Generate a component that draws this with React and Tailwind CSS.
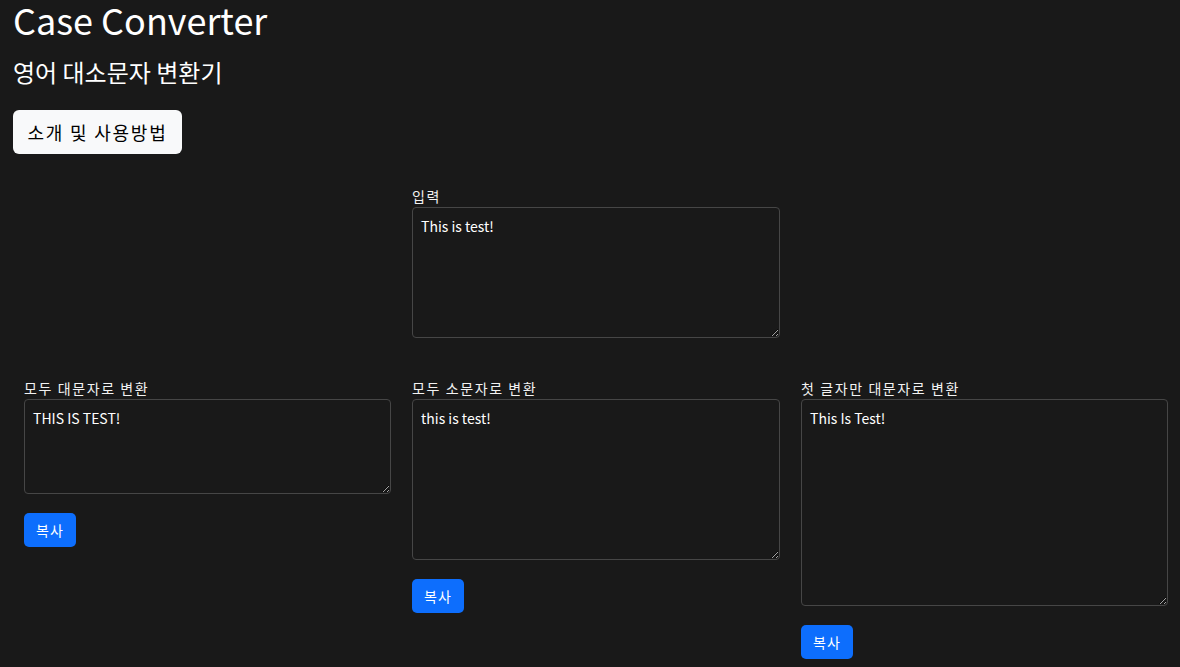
import React, { useState } from "react";

const font = { fontFamily: '"Noto Sans CJK KR", "Noto Sans", sans-serif' };

const toTitle = (s) =>
  s
    .split(" ")
    .map((w) => (w ? w[0].toUpperCase() + w.slice(1).toLowerCase() : w))
    .join(" ");

const Field = ({ label, value, onChange, heightClass, readOnly, withButton }) => (
  <div className="flex flex-col">
    <label className="text-[14px] leading-[21px] tracking-[1.6px] text-[#f2f2f2]">{label}</label>
    <textarea
      value={value}
      onChange={onChange}
      readOnly={readOnly}
      className={`w-full ${heightClass} bg-[#191919] text-white text-[14px] leading-[21px] px-2 py-2 border border-[#464646] rounded-[4px] outline-none`}
    />
    {withButton && (
      <div className="mt-[19px]">
        <button
          type="button"
          onClick={() => navigator.clipboard?.writeText(value)}
          className="h-[34px] w-[52px] rounded-[5px] bg-[#0d6efd] text-white text-[14px] tracking-[1px]"
        >
          복사
        </button>
      </div>
    )}
  </div>
);

const App = () => {
  const [text, setText] = useState("This is test!");

  return (
    <div className="min-h-screen bg-[#191919] text-white" style={font}>
      <div className="pl-[13px] pr-3">
        <h1 className="text-[36px] leading-[38px] font-normal mb-[19px]">Case Converter</h1>
        <h4 className="text-[24px] leading-[29px] font-normal">영어 대소문자 변환기</h4>
        <button
          type="button"
          className="mt-[24px] h-[44px] w-[169px] rounded-[6px] bg-[#f8f9fa] text-black text-[18px] tracking-[1.8px]"
        >
          소개 및 사용방법
        </button>
      </div>

      <div className="ml-[24px] grid grid-cols-[367px_368px_367px] gap-x-[21px] mt-[32px]">
        <div />
        <Field
          label="입력"
          value={text}
          onChange={(e) => setText(e.target.value)}
          heightClass="h-[131px]"
        />
        <div />
      </div>

      <div className="ml-[24px] grid grid-cols-[367px_368px_367px] gap-x-[21px] mt-[40px] items-start pb-2">
        <Field label="모두 대문자로 변환" value={text.toUpperCase()} readOnly heightClass="h-[95px]" withButton />
        <Field label="모두 소문자로 변환" value={text.toLowerCase()} readOnly heightClass="h-[161px]" withButton />
        <Field label="첫 글자만 대문자로 변환" value={toTitle(text)} readOnly heightClass="h-[207px]" withButton />
      </div>
    </div>
  );
};

export default App;
